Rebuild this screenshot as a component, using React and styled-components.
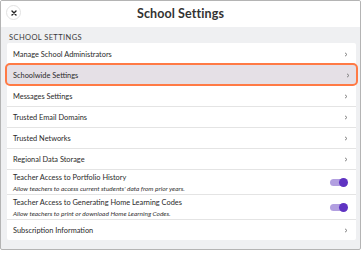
import React from "react";
import styled, { createGlobalStyle, css } from "styled-components";

const Global = createGlobalStyle`
  html, body { margin: 0; padding: 0; background: #ffffff; }
  body { font-family: "Lato", "Noto Sans", sans-serif; }
`;

const Modal = styled.div`
  box-sizing: border-box;
  width: 361px;
  height: 250px;
  border: 1px solid #b4b4b4;
  border-radius: 2px;
  display: flex;
  flex-direction: column;
  overflow: hidden;
  background: #eff0f2;
`;

const Header = styled.header`
  height: 26px;
  flex: none;
  background: #ffffff;
  display: grid;
  grid-template-columns: 1fr auto 1fr;
  align-items: center;
  padding: 0 5px;
`;

const CloseButton = styled.button`
  width: 15px;
  height: 15px;
  border-radius: 50%;
  border: 1px solid #e2e2e2;
  background: #fff;
  padding: 0;
  display: flex;
  align-items: center;
  justify-content: center;
  justify-self: start;
  margin-top: -3px;
`;

const Title = styled.h1`
  margin: 0 0 1px;
  font-size: 12.5px;
  font-weight: 700;
  color: #333;
  letter-spacing: 0.1px;
`;

const Body = styled.div`
  flex: 1;
  padding: 6px 4px 0 6px;
`;

const SectionLabel = styled.div`
  font-size: 7.5px;
  color: #3a3a3a;
  letter-spacing: 0.4px;
  text-transform: uppercase;
  padding-left: 2px;
  margin-bottom: 1px;
`;

const Card = styled.div`
  background: #fff;
  border-radius: 2px;
`;

const Row = styled.div`
  box-sizing: border-box;
  min-height: ${(p) => (p.$tall ? 25 : 21)}px;
  display: flex;
  align-items: center;
  justify-content: space-between;
  padding: 0 8px 0 6px;
  border-top: 1px solid ${(p) => (p.$first ? "transparent" : "#e4e4e4")};
  ${(p) =>
    p.$selected &&
    css`
      background: #e5e0e6;
      border: 2px solid #ff7a45;
      border-radius: 5px;
      margin: -1px -2px;
      padding: 1px 6px 0 6px;
      min-height: 23px;
      position: relative;
    `}
`;

const TextCol = styled.div`
  display: flex;
  flex-direction: column;
  gap: 3px;
`;

const Label = styled.span`
  font-size: 7.4px;
  color: #2a2a2a;
`;

const Desc = styled.span`
  font-size: 6.5px;
  font-style: italic;
  color: #333;
`;

const Track = styled.div`
  width: 16px;
  height: 7px;
  border-radius: 4px;
  background: #b29fe0;
  position: relative;
  margin-right: 2px;
`;

const Knob = styled.div`
  position: absolute;
  right: -2px;
  top: -1px;
  width: 9px;
  height: 9px;
  border-radius: 50%;
  background: #5f33c2;
`;

const Chevron = () => (
  <svg width="4" height="5" viewBox="0 0 4 5">
    <path d="M1 0.8 L3 2.5 L1 4.2" fill="none" stroke="#777" strokeWidth="0.9" />
  </svg>
);

const Toggle = () => (
  <Track>
    <Knob />
  </Track>
);

const items = [
  { label: "Manage School Administrators" },
  { label: "Schoolwide Settings", selected: true },
  { label: "Messages Settings" },
  { label: "Trusted Email Domains" },
  { label: "Trusted Networks" },
  { label: "Regional Data Storage" },
  {
    label: "Teacher Access to Portfolio History",
    desc: "Allow teachers to access current students' data from prior years.",
    toggle: true,
  },
  {
    label: "Teacher Access to Generating Home Learning Codes",
    desc: "Allow teachers to print or download Home Learning Codes.",
    toggle: true,
  },
  { label: "Subscription Information" },
];

export default function App() {
  return (
    <>
      <Global />
      <Modal>
        <Header>
          <CloseButton aria-label="Close">
            <svg width="6" height="6" viewBox="0 0 6 6">
              <path d="M1 1 L5 5 M5 1 L1 5" stroke="#222" strokeWidth="1.4" strokeLinecap="round" />
            </svg>
          </CloseButton>
          <Title>School Settings</Title>
          <span />
        </Header>
        <Body>
          <SectionLabel>School Settings</SectionLabel>
          <Card>
            {items.map((it, i) => (
              <Row key={it.label} $first={i === 0 || it.selected || (i > 0 && items[i - 1].selected)} $selected={it.selected} $tall={!!it.desc}>
                {it.desc ? (
                  <TextCol>
                    <Label>{it.label}</Label>
                    <Desc>{it.desc}</Desc>
                  </TextCol>
                ) : (
                  <Label>{it.label}</Label>
                )}
                {it.toggle ? <Toggle /> : <Chevron />}
              </Row>
            ))}
          </Card>
        </Body>
      </Modal>
    </>
  );
}
